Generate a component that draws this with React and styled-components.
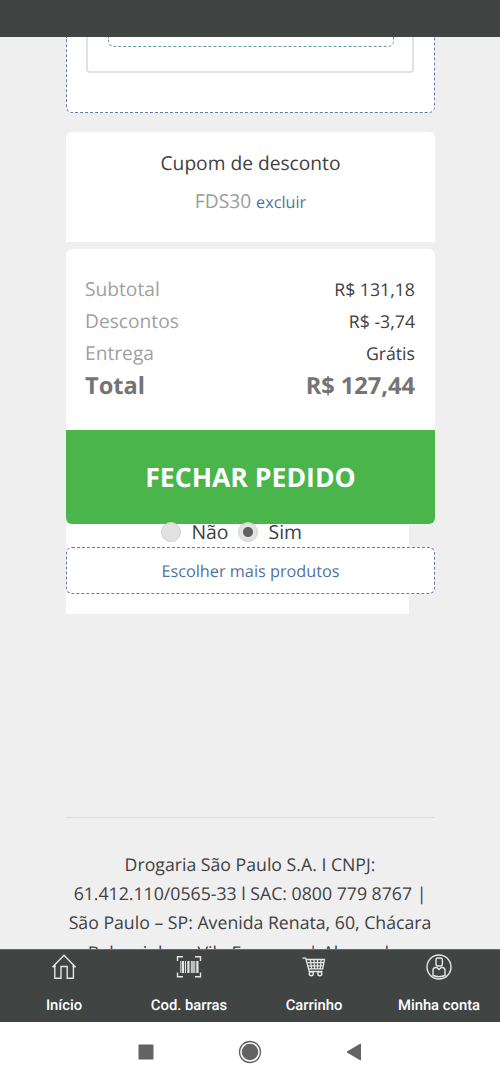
import React, { useState } from "react";
import styled, { createGlobalStyle } from "styled-components";

const totals = [
  { label: "Subtotal", value: "R$ 131,18" },
  { label: "Descontos", value: "R$ -3,74" },
  { label: "Entrega", value: "Grátis" },
];

const HomeIcon = () => (
  <svg width="26" height="26" viewBox="0 0 26 26">
    <path d="M4.800 11.800 1.600 13 13 1.300 24.500 13l-3.200-1.200M3.800 11V24.300h6.200V12.500h6.200V24.300h6.200V11" />
  </svg>
);

const BarcodeIcon = () => (
  <svg width="26" height="26" viewBox="0 0 26 26">
    <path d="M1.500 7V2.700h5.500M19 2.700h5.500V7M1.500 18.500v4.200H7M19 22.700h5.500v-4.200" />
    <path d="M4.800 7v12M9.500 7v12M15.300 7v12M18.800 7v12" strokeWidth="1" />
    <path d="M7 7v12M12.400 7v12M21.400 7v12" strokeWidth="2.200" />
    <path d="M17 7v12" strokeWidth="1.500" />
  </svg>
);

const CartIcon = () => (
  <svg width="26" height="26" viewBox="0 0 26 26">
    <path
      d="M1.500 4.200h3.200L8.300 17.500h13.200M5 5.500h18.500l-1.800 9.300H7.500M6 8.700h17M6.800 11.800h15.500M9.300 5.500l1.300 9.300M13 5.500l.5 9.300M16.500 5.500v9.300M20.200 5.500l-.9 9.300"
      strokeWidth="1.300"
    />
    <circle cx="10.300" cy="19.700" r="2" />
    <circle cx="18.800" cy="19.700" r="2" />
  </svg>
);

const AccountIcon = () => (
  <svg width="26" height="26" viewBox="0 0 26 26">
    <circle cx="13" cy="13" r="12" />
    <rect x="10" y="4" width="6.400" height="8" rx="2" />
    <path d="M7 21.500v-5c0-2 .8-3 2.800-3h1l2.200 2 2.200-2h1c2 0 2.800 1 2.800 3v5c-3.500 1.400-8.500 1.400-12 0z" />
  </svg>
);

const tabs = [
  { label: "Início", icon: <HomeIcon /> },
  { label: "Cod. barras", icon: <BarcodeIcon /> },
  { label: "Carrinho", icon: <CartIcon /> },
  { label: "Minha conta", icon: <AccountIcon /> },
];

const App = () => {
  const [answer, setAnswer] = useState("sim");

  return (
    <Screen>
      <GlobalStyle />
      <StatusBar />
      <Content>
        <ProductsPanel>
          <ProductBox>
            <ProductAction />
          </ProductBox>
        </ProductsPanel>
        <Coupon>
          <CouponTitle>Cupom de desconto</CouponTitle>
          <CouponCode>
            FDS30 <CouponLink href="#">excluir</CouponLink>
          </CouponCode>
        </Coupon>
        <Summary>
          {totals.map((row) => (
            <Row key={row.label}>
              <Label>{row.label}</Label>
              <span>{row.value}</span>
            </Row>
          ))}
          <TotalRow>
            <span>Total</span>
            <span>R$ 127,44</span>
          </TotalRow>
        </Summary>
        <CloseOrder>FECHAR PEDIDO</CloseOrder>
        <Options>
          <Answers>
            <Answer>
              <Radio checked={answer === "nao"} onChange={() => setAnswer("nao")} />
              Não
            </Answer>
            <Answer>
              <Radio checked={answer === "sim"} onChange={() => setAnswer("sim")} />
              Sim
            </Answer>
          </Answers>
          <MoreProducts href="#">Escolher mais produtos</MoreProducts>
        </Options>
        <Footer>
          Drogaria São Paulo S.A. I CNPJ:
          <br />
          61.412.110/0565-33 l SAC: 0800 779 8767 |
          <br />
          São Paulo – SP: Avenida Renata, 60, Chácara
          <FooterLine>Belenzinho – Vila Formosa | Alexandre</FooterLine>
        </Footer>
      </Content>
      <TabBar>
        {tabs.map((tab) => (
          <Tab key={tab.label}>
            {tab.icon}
            <TabLabel>{tab.label}</TabLabel>
          </Tab>
        ))}
      </TabBar>
      <SystemBar>
        <svg width="16" height="16" viewBox="0 0 16 16">
          <rect x="0.500" y="0.500" width="15" height="15" rx="0.500" />
        </svg>
        <svg width="24" height="24" viewBox="0 0 24 24">
          <circle cx="12" cy="12" r="10.500" fill="none" stroke="#636363" strokeWidth="1.300" />
          <circle cx="12" cy="12" r="8.300" />
        </svg>
        <svg width="16" height="18" viewBox="0 0 16 18">
          <path d="M1 9 14.500 1v16z" stroke="#636363" strokeLinejoin="round" />
        </svg>
      </SystemBar>
    </Screen>
  );
};

const GlobalStyle = createGlobalStyle`
  * {
    box-sizing: border-box;
  }

  body {
    margin: 0;
    background: #efefef;
    font-family: "Open Sans", sans-serif;
    color: #404040;
    text-rendering: geometricPrecision;
  }
`;

const Screen = styled.div`
  width: 500px;
  height: 1082px;
  display: flex;
  flex-direction: column;
  overflow: hidden;
`;

const StatusBar = styled.div`
  height: 37px;
  flex-shrink: 0;
  background: #404544;
`;

const Content = styled.main`
  flex: 1;
  min-height: 0;
  overflow: hidden;
  padding: 0 65px 0 66px;
`;

const ProductsPanel = styled.section`
  height: 76px;
  padding: 0 20px 0 19px;
  background: #fff;
  border: 1px dashed #5f7da8;
  border-top: none;
  border-radius: 0 0 6px 6px;
`;

const ProductBox = styled.div`
  height: 36px;
  padding: 0 18px 0 20px;
  border: 2px solid #e2e2e2;
  border-top: none;
  border-radius: 0 0 4px 4px;
`;

const ProductAction = styled.div`
  height: 10px;
  border: 1px dashed #6a96ad;
  border-top: none;
  border-radius: 0 0 6px 6px;
`;

const Coupon = styled.section`
  height: 110px;
  margin: 19px 0 7px;
  padding-top: 16px;
  background: #fff;
  border-radius: 6px 6px 0 0;
  text-align: center;
`;

const CouponTitle = styled.h2`
  margin: 0;
  font-size: 19.2px;
  line-height: 30px;
  font-weight: 400;
`;

const CouponCode = styled.div`
  margin-top: 8px;
  font-size: 19.2px;
  line-height: 30px;
  color: #9c9c9c;
`;

const CouponLink = styled.a`
  font-size: 16.2px;
  color: #5272a0;
  text-decoration: none;
`;

const Summary = styled.section`
  height: 181px;
  padding: 25px 20px 0 19px;
  background: #fff;
  border-radius: 6px 6px 0 0;
`;

const Row = styled.div`
  display: flex;
  justify-content: space-between;
  font-size: 17.7px;
  line-height: 32px;
`;

const Label = styled.span`
  font-size: 19.2px;
  line-height: 30px;
  color: #a0a0a0;
`;

const TotalRow = styled(Row)`
  font-size: 23.6px;
  line-height: 31px;
  font-weight: 700;
  color: #747474;
`;

const CloseOrder = styled.button`
  display: block;
  width: 100%;
  height: 94px;
  padding: 0;
  border: none;
  border-radius: 0 0 6px 6px;
  background: #49b54b;
  color: #fff;
  font-family: inherit;
  font-size: 26.6px;
  font-weight: 700;
  text-rendering: inherit;
`;

const Options = styled.section`
  width: 343px;
  height: 90px;
  background: #fff;
`;

const Answers = styled.div`
  display: flex;
  height: 23px;
  padding: 0 0 8px 95px;
  gap: 9.5px;
  font-size: 19.4px;
  line-height: 16px;
`;

const Answer = styled.label`
  display: flex;
  align-items: center;
  gap: 10.5px;
`;

const Radio = styled.input.attrs({ type: "radio" })`
  appearance: none;
  width: 20px;
  height: 20px;
  margin: 1px 0 0;
  border: 1px solid #d0d0d0;
  border-radius: 50%;
  background: ${(props) =>
    props.checked
      ? "radial-gradient(circle, #606060 0 4.5px, #e2e2e2 5.5px)"
      : "#e2e2e2"};
`;

const MoreProducts = styled.a`
  display: block;
  width: 369px;
  height: 47px;
  border: 1px dashed #5f7da8;
  border-radius: 6px;
  background: #fff;
  color: #5272a0;
  font-size: 16.25px;
  line-height: 46px;
  text-align: center;
  text-decoration: none;
`;

const Footer = styled.footer`
  margin-top: 203px;
  padding: 33px 1px 0 0;
  border-top: 1px solid #dedede;
  font-size: 17.7px;
  line-height: 29px;
  text-align: center;
  white-space: nowrap;
`;

const FooterLine = styled.div`
  padding: 1px 6px 0 0;
`;

const TabBar = styled.nav`
  display: grid;
  grid-template-columns: repeat(4, 125px);
  height: 73px;
  flex-shrink: 0;
  background: #404544;
  border-top: 1px solid #686c6b;
`;

const Tab = styled.div`
  display: flex;
  flex-direction: column;
  align-items: center;
  padding: 4px 0 0 3px;

  svg {
    fill: none;
    stroke: #e4e6e5;
    stroke-width: 1.4;
  }
`;

const TabLabel = styled.span`
  margin-top: 15px;
  color: #fff;
  font-family: Roboto, sans-serif;
  font-size: 14.8px;
  line-height: 20px;
  font-weight: 500;
  white-space: nowrap;
`;

const SystemBar = styled.div`
  display: flex;
  align-items: center;
  justify-content: center;
  gap: 84px;
  height: 60px;
  flex-shrink: 0;
  background: #fff;

  svg {
    fill: #636363;
  }
`;

export default App;
